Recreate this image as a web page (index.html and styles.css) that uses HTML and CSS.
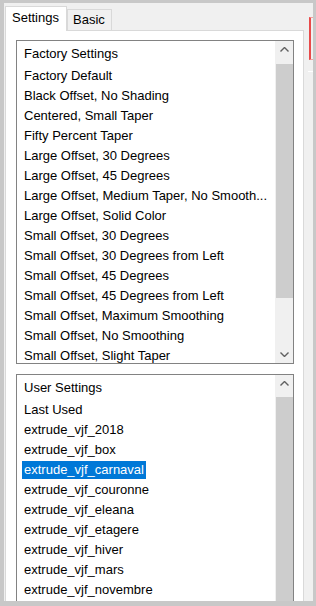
FILE: index.html
```html
<!DOCTYPE html>
<html lang="en">
<head>
  <meta charset="UTF-8" />
  <title>Extrude Presets</title>
  <link rel="stylesheet" href="styles.css">
</head>
<body>
  <div class="dialog">
    <div class="tabs">
      <div class="tab tab-active">Settings</div>
      <div class="tab">Basic</div>
    </div>

    <div class="tab-panel">
      <!-- Factory presets -->
      <div class="listbox listbox-factory">
        <ul class="items">
          <li class="group">Factory Settings</li>
          <li>Factory Default</li>
          <li>Black Offset, No Shading</li>
          <li>Centered, Small Taper</li>
          <li>Fifty Percent Taper</li>
          <li>Large Offset, 30 Degrees</li>
          <li>Large Offset, 45 Degrees</li>
          <li>Large Offset, Medium Taper, No Smooth...</li>
          <li>Large Offset, Solid Color</li>
          <li>Small Offset, 30 Degrees</li>
          <li>Small Offset, 30 Degrees from Left</li>
          <li>Small Offset, 45 Degrees</li>
          <li>Small Offset, 45 Degrees from Left</li>
          <li>Small Offset, Maximum Smoothing</li>
          <li>Small Offset, No Smoothing</li>
          <li>Small Offset, Slight Taper</li>
        </ul>
        <div class="scrollbar">
          <div class="sb-btn">
            <svg width="9" height="5" viewBox="0 0 9 5"><polyline points="0.5,4.5 4.5,0.5 8.5,4.5" /></svg>
          </div>
          <div class="sb-track">
            <div class="sb-thumb thumb-factory"></div>
          </div>
          <div class="sb-btn">
            <svg width="9" height="5" viewBox="0 0 9 5"><polyline points="0.5,0.5 4.5,4.5 8.5,0.5" /></svg>
          </div>
        </div>
      </div>

      <!-- User presets -->
      <div class="listbox listbox-user">
        <ul class="items">
          <li class="group">User Settings</li>
          <li>Last Used</li>
          <li>extrude_vjf_2018</li>
          <li>extrude_vjf_box</li>
          <li><span class="selected">extrude_vjf_carnaval</span></li>
          <li>extrude_vjf_couronne</li>
          <li>extrude_vjf_eleana</li>
          <li>extrude_vjf_etagere</li>
          <li>extrude_vjf_hiver</li>
          <li>extrude_vjf_mars</li>
          <li>extrude_vjf_novembre</li>
        </ul>
        <div class="scrollbar">
          <div class="sb-btn">
            <svg width="9" height="5" viewBox="0 0 9 5"><polyline points="0.5,4.5 4.5,0.5 8.5,4.5" /></svg>
          </div>
          <div class="sb-track">
            <div class="sb-thumb thumb-user"></div>
          </div>
        </div>
      </div>
    </div>

    <div class="edge-marker"></div>
    <div class="edge-tick"></div>
  </div>
</body>
</html>
```

FILE: styles.css
```css
body {
  margin: 0;
  background-color: #c8c8c8;
  font-family: "Liberation Sans", Arial, sans-serif;
  font-size: 13px;
  color: #000;
}

.dialog {
  position: relative;
  display: flex;
  flex-direction: column;
  width: 309px;
  height: 598px;
  margin: 3px 0 0 4px;
  padding: 3px 9px 0 1px;
  box-sizing: border-box;
  background-color: #f0f0f0;
  overflow: hidden;
}

/* tab strip */
.tabs {
  display: flex;
  align-items: flex-end;
  margin-bottom: -1px;
  position: relative;
  z-index: 1;
}

.tab {
  height: 21px;
  margin-bottom: 1px;
  padding: 0 6px 0 5px;
  line-height: 20px;
  box-sizing: border-box;
  border: 1px solid #d9d9d9;
  border-bottom: none;
  background-color: #f0f0f0;
}

.tab-active {
  height: 25px;
  margin-bottom: 0;
  padding: 1px 7px 0 6px;
  background-color: #fff;
}

.tab-panel {
  flex: 1;
  display: flex;
  flex-direction: column;
  gap: 10px;
  padding: 9px 9px 0 10px;
  background-color: #fff;
  border: 1px solid #d9d9d9;
  border-bottom: none;
  overflow: hidden;
}

/* list boxes */
.listbox {
  display: flex;
  flex-shrink: 0;
  border: 1px solid #828282;
  background-color: #fff;
  overflow: hidden;
}

.listbox-factory {
  height: 324px;
  box-sizing: border-box;
}

.listbox-user {
  height: 280px;
  box-sizing: border-box;
}

.items {
  flex: 1;
  list-style: none;
  margin: 0;
  padding: 3px 0 0 5px;
  white-space: nowrap;
  overflow: hidden;
}

.items li {
  height: 20px;
  line-height: 20px;
  padding-left: 2px;
}

.items li.group {
  height: 22px;
}

.items li .selected {
  display: inline-block;
  margin: 1px 0 0 -2px;
  padding: 0 2px;
  line-height: 18px;
  background-color: #0078d7;
  color: #fff;
}

/* scrollbars */
.scrollbar {
  display: flex;
  flex-direction: column;
  width: 18px;
  background-color: #f0f0f0;
}

.sb-btn {
  display: flex;
  align-items: center;
  justify-content: center;
  height: 17px;
  flex-shrink: 0;
}

.sb-btn svg polyline {
  fill: none;
  stroke: #606060;
  stroke-width: 1.4;
}

.sb-track {
  flex: 1;
}

.sb-thumb {
  margin-left: 1px;
  background-color: #cdcdcd;
}

.thumb-factory {
  margin-top: 6px;
  height: 234px;
}

.thumb-user {
  margin-top: 5px;
  height: 400px;
}

/* sliver of the neighbouring window */
.edge-marker {
  position: absolute;
  left: 305px;
  top: 14px;
  width: 2px;
  height: 41px;
  border-left: 2px solid #e84a4a;
  border-top: 1px solid #f3a0a0;
  border-bottom: 1px solid #f3a0a0;
}

.edge-tick {
  position: absolute;
  left: 304px;
  top: 68px;
  width: 5px;
  height: 1px;
  background-color: #fff;
}
```
